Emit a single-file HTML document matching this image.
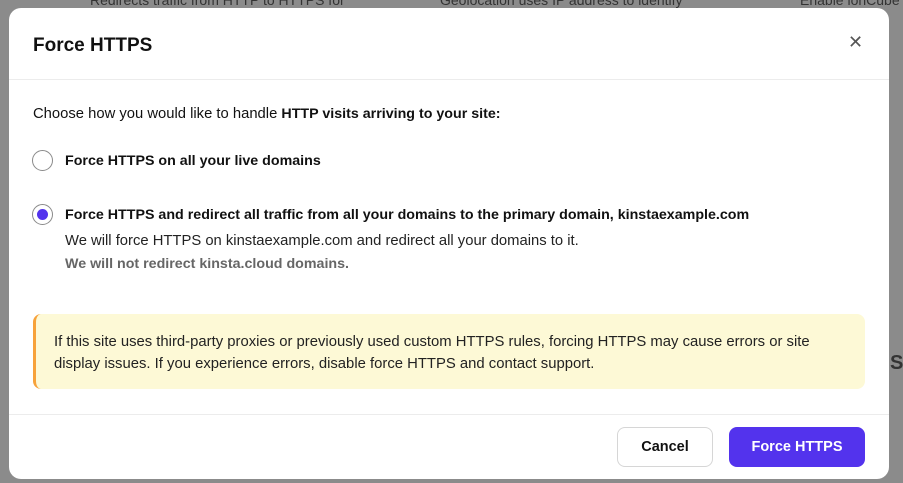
<!DOCTYPE html>
<html><head><meta charset="utf-8"><style>
*{box-sizing:border-box;margin:0;padding:0}
body{width:903px;height:483px;overflow:hidden;background:#8b8b8b;font-family:"Liberation Sans",sans-serif;color:#111;position:relative}
.bgt{position:absolute;color:#333;font-size:14px}
.modal{position:absolute;left:9px;top:8px;width:880px;height:471px;background:#fff;border-radius:12px;overflow:hidden}
.title{position:absolute;left:24px;top:27px;font-size:19px;font-weight:bold;color:#111}
.x{position:absolute;left:839px;top:24px;font-size:18px;color:#555}
.hr{position:absolute;left:0;width:880px;height:1px;background:#ececec}
.t{position:absolute;font-size:14.8px;white-space:nowrap}
.t b,.b{font-size:14.25px;font-weight:bold}
.radio{position:absolute;width:21px;height:21px;border:1px solid #8a8a8a;border-radius:50%;background:#fff}
.radio.on::after{content:"";position:absolute;left:4px;top:4px;width:11px;height:11px;border-radius:50%;background:#5333ed}
.warn{position:absolute;left:24px;top:306px;width:832px;height:75px;background:#fdf9d6;border-left:3px solid #f7a23a;border-radius:8px;padding:17px 0 0 18px;font-size:14.85px;line-height:22px;color:#222;white-space:nowrap}
.btn{position:absolute;top:419px;height:40px;border-radius:8px;font-size:14.5px;font-weight:bold;text-align:center;line-height:38px}
</style></head><body>
<div class="bgt" style="left:90px;top:-8px">Redirects traffic from HTTP to HTTPS for</div>
<div class="bgt" style="left:440px;top:-8px">Geolocation uses IP address to identify</div>
<div class="bgt" style="left:800px;top:-8px">Enable ionCube</div>
<div class="bgt" style="left:890px;top:352px;font-size:20px;font-weight:bold">S</div>
<div class="modal">
<div class="title">Force HTTPS</div>
<div class="x">✕</div>
<div class="hr" style="top:71px"></div>
<div class="t" style="left:24px;top:98px">Choose how you would like to handle <b>HTTP visits arriving to your site:</b></div>
<div class="radio" style="left:23px;top:142px"></div>
<div class="t b" style="left:56px;top:145px">Force HTTPS on all your live domains</div>
<div class="radio on" style="left:23px;top:196px"></div>
<div class="t b" style="left:56px;top:199px">Force HTTPS and redirect all traffic from all your domains to the primary domain, kinstaexample.com</div>
<div class="t" style="left:56px;top:225px;color:#222">We will force HTTPS on kinstaexample.com and redirect all your domains to it.</div>
<div class="t b" style="left:56px;top:248px;color:#666">We will not redirect kinsta.cloud domains.</div>
<div class="warn">If this site uses third-party proxies or previously used custom HTTPS rules, forcing HTTPS may cause errors or site<br>display issues. If you experience errors, disable force HTTPS and contact support.</div>
<div class="hr" style="top:406px"></div>
<div class="btn" style="left:608px;width:96px;border:1px solid #d6d6d6;color:#111;background:#fff">Cancel</div>
<div class="btn" style="left:720px;width:136px;background:#5333ed;color:#fff;line-height:40px">Force HTTPS</div>
</div>
</body></html>
